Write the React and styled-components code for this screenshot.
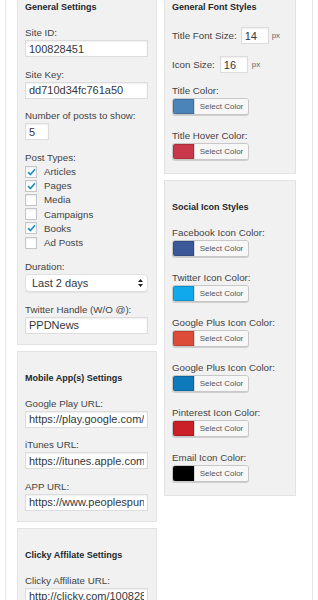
import React from 'react';
import styled, { createGlobalStyle } from 'styled-components';

const Global = createGlobalStyle`
  html, body { margin: 0; padding: 0; background: #fff; }
  body {
    font-family: "Liberation Sans", Arial, Helvetica, sans-serif;
    color: #444;
    overflow: hidden;
  }
  * { box-sizing: border-box; }
`;

const Page = styled.div`
  margin: -20px 0 0 5px;
  width: 308px;
  min-height: 700px;
  border-left: 1px solid #e6e6e6;
  border-right: 1px solid #e6e6e6;
  padding-left: 11px;
  display: flex;
  align-items: flex-start;
  gap: 7px;
`;

const Column = styled.div`
  width: ${(p) => p.$w}px;
  display: flex;
  flex-direction: column;
  gap: 6px;
`;

const Panel = styled.section`
  background: #f1f1f1;
  border: 1px solid #e3e3e3;
  padding: 20px 8px ${(p) => (p.$pb ? p.$pb : 10)}px 7px;
`;

const Heading = styled.h3`
  margin: 0 0 14px;
  font-size: 9px;
  line-height: 12px;
  font-weight: bold;
  color: #23282d;
  white-space: nowrap;
`;

const Field = styled.div`
  margin-bottom: ${(p) => (p.$gap != null ? p.$gap : 11.5)}px;
  &:last-child { margin-bottom: 0; }
`;

const Label = styled.label`
  display: block;
  font-size: 9.75px;
  line-height: 12px;
  margin-bottom: 1px;
  color: #444;
  white-space: nowrap;
`;

const TextInput = styled.input`
  display: block;
  width: ${(p) => (p.$w ? `${p.$w}px` : '100%')};
  height: 17px;
  margin: 0;
  padding: 0 3px;
  border: 1px solid #dcdcdc;
  border-radius: 0;
  background: #fff;
  box-shadow: inset 0 1px 2px rgba(0, 0, 0, 0.07);
  font-family: "Liberation Sans", Arial, Helvetica, sans-serif;
  font-size: 11px;
  color: #32373c;
  outline: none;
`;

const SelectBox = styled.div`
  display: flex;
  align-items: center;
  justify-content: space-between;
  height: 18px;
  padding: 0 4px 0 6px;
  background: #fff;
  border: 1px solid #e0e0e0;
  border-radius: 4px;
  box-shadow: 0 1px 1px rgba(0, 0, 0, 0.06);
  font-size: 11px;
  color: #32373c;
`;

const CheckList = styled.div`
  display: flex;
  flex-direction: column;
  margin-top: 1px;
`;

const CheckRow = styled.div`
  display: flex;
  align-items: center;
  height: 14.2px;
  gap: 7px;
  font-size: 9.75px;
  color: #444;
`;

const Box = styled.span`
  width: 12px;
  height: 12px;
  flex: none;
  display: flex;
  align-items: center;
  justify-content: center;
  background: #fff;
  border: 1px solid #c3c6c9;
  box-shadow: inset 0 1px 2px rgba(0, 0, 0, 0.08);
`;

const InlineRow = styled.div`
  display: flex;
  align-items: center;
  gap: ${(p) => p.$gap}px;
  margin-bottom: 12px;
`;

const InlineLabel = styled.span`
  font-size: 9.75px;
  color: #444;
  white-space: nowrap;
`;

const Unit = styled.span`
  font-size: 8px;
  color: #666;
  margin-left: -1px;
`;

const ColorButton = styled.div`
  display: flex;
  width: 77px;
  height: 17px;
  border: 1px solid #c8c8c8;
  border-radius: 3px;
  overflow: hidden;
  box-shadow: 0 1px 0 #cfcfcf;
  background: #f7f7f7;
`;

const Swatch = styled.span`
  width: 21px;
  flex: none;
  background: ${(p) => p.$color};
  box-shadow: inset 0 0 0 1px rgba(0, 0, 0, 0.15);
`;

const ColorText = styled.span`
  flex: 1;
  display: flex;
  align-items: center;
  justify-content: center;
  border-left: 1px solid #d6d6d6;
  font-size: 8px;
  color: #555;
  background: #f7f7f7;
`;

const Check = () => (
  <svg width="9" height="8" viewBox="0 0 9 8">
    <path d="M1 4.2 L3.4 6.5 L8 1.2" fill="none" stroke="#1e8cbe" strokeWidth="1.6" />
  </svg>
);

const Arrows = () => (
  <svg width="5" height="8" viewBox="0 0 5 8">
    <path d="M2.5 0 L5 3 H0 Z M2.5 8 L5 5 H0 Z" fill="#222" />
  </svg>
);

const postTypes = [
  ['Articles', true],
  ['Pages', true],
  ['Media', false],
  ['Campaigns', false],
  ['Books', true],
  ['Ad Posts', false],
];

const socialColors = [
  ['Facebook Icon Color:', '#3b5998'],
  ['Twitter Icon Color:', '#10a9ec'],
  ['Google Plus Icon Color:', '#dd4b39'],
  ['Google Plus Icon Color:', '#0e79bb'],
  ['Pinterest Icon Color:', '#cb2027'],
  ['Email Icon Color:', '#000000'],
];

const ColorField = ({ label, color }) => (
  <Field $gap={15}>
    <Label>{label}</Label>
    <ColorButton>
      <Swatch $color={color} />
      <ColorText>Select Color</ColorText>
    </ColorButton>
  </Field>
);

const TextField = ({ label, value, w }) => (
  <Field>
    <Label>{label}</Label>
    <TextInput readOnly value={value} $w={w} />
  </Field>
);

export default function App() {
  return (
    <>
      <Global />
      <Page>
        <Column $w={140}>
          <Panel>
            <Heading>General Settings</Heading>
            <TextField label="Site ID:" value="100828451" />
            <TextField label="Site Key:" value="dd710d34fc761a50" />
            <TextField label="Number of posts to show:" value="5" w={24} />
            <Field>
              <Label>Post Types:</Label>
              <CheckList>
                {postTypes.map(([name, on]) => (
                  <CheckRow key={name}>
                    <Box>{on && <Check />}</Box>
                    {name}
                  </CheckRow>
                ))}
              </CheckList>
            </Field>
            <Field>
              <Label>Duration:</Label>
              <SelectBox>
                <span>Last 2 days</span>
                <Arrows />
              </SelectBox>
            </Field>
            <TextField label="Twitter Handle (W/O @):" value="PPDNews" />
          </Panel>
          <Panel>
            <Heading>Mobile App(s) Settings</Heading>
            <TextField label="Google Play URL:" value="https://play.google.com/store/apps" />
            <TextField label="iTunes URL:" value="https://itunes.apple.com/us/app" />
            <TextField label="APP URL:" value="https://www.peoplespundit.com" />
          </Panel>
          <Panel>
            <Heading>Clicky Affilate Settings</Heading>
            <TextField label="Clicky Affiliate URL:" value="http://clicky.com/100828451" />
          </Panel>
        </Column>
        <Column $w={132}>
          <Panel $pb={13}>
            <Heading>General Font Styles</Heading>
            <InlineRow $gap={4}>
              <InlineLabel>Title Font Size:</InlineLabel>
              <TextInput readOnly value="14" $w={28} />
              <Unit>px</Unit>
            </InlineRow>
            <InlineRow $gap={5}>
              <InlineLabel>Icon Size:</InlineLabel>
              <TextInput readOnly value="16" $w={28} />
              <Unit>px</Unit>
            </InlineRow>
            <ColorField label="Title Color:" color="#4b84b9" />
            <ColorField label="Title Hover Color:" color="#c9384a" />
          </Panel>
          <Panel $pb={13}>
            <Heading>Social Icon Styles</Heading>
            {socialColors.map(([label, color], i) => (
              <ColorField key={i} label={label} color={color} />
            ))}
          </Panel>
        </Column>
      </Page>
    </>
  );
}
